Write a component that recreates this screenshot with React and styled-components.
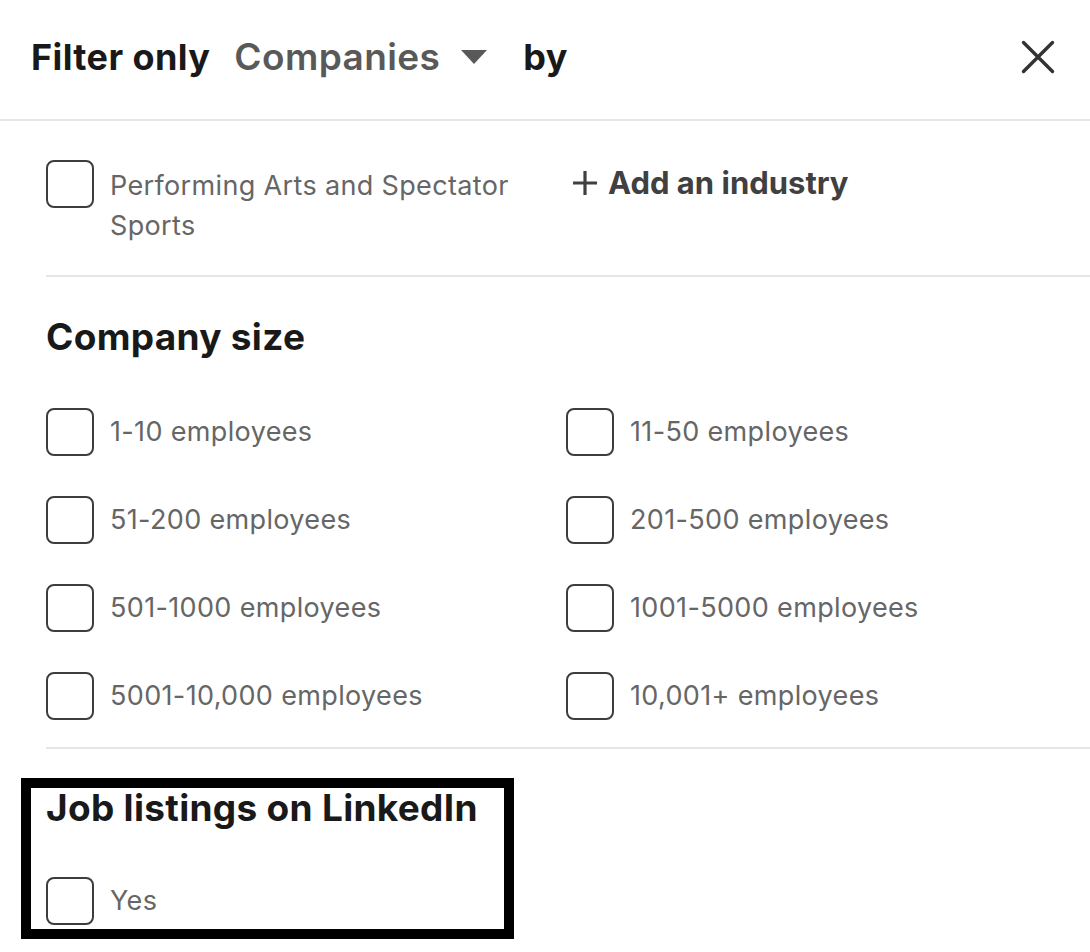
import React from 'react';
import styled, { createGlobalStyle } from 'styled-components';

const GlobalStyle = createGlobalStyle`
  html, body {
    margin: 0;
    padding: 0;
    background: #ffffff;
  }
  body {
    font-family: Inter, "Noto Sans", "Liberation Sans", sans-serif;
    -webkit-font-smoothing: antialiased;
  }
`;

const Panel = styled.div`
  width: 1090px;
  height: 952px;
  overflow: hidden;
  background: #ffffff;
`;

const Header = styled.header`
  display: flex;
  align-items: center;
  height: 121px;
  padding: 0 35px 6px 31px;
  border-bottom: 2px solid #e6e6e6;
  box-sizing: border-box;
`;

const Title = styled.span`
  font-size: 36px;
  font-weight: 700;
  color: #191919;
  letter-spacing: 0.4px;
`;

const TypeSelect = styled.button`
  display: flex;
  align-items: center;
  gap: 21px;
  margin: 0 36px 0 24px;
  padding: 0;
  border: 0;
  background: none;
  font-family: inherit;
  font-size: 37px;
  font-weight: 600;
  color: #595959;
  letter-spacing: 0.4px;
  cursor: pointer;
`;

const CloseButton = styled.button`
  margin-left: auto;
  display: flex;
  padding: 0;
  border: 0;
  background: none;
  cursor: pointer;
`;

const Body = styled.div`
  padding-left: 46px;
`;

const Section = styled.section`
  border-bottom: 2px solid #e6e6e6;
  padding: ${p => p.$pad};
`;

const Highlight = styled.section`
  margin: 29px 0 0 -25px;
  width: 493px;
  height: 161px;
  box-sizing: border-box;
  border: 10px solid #000;
  padding: 0 15px;
  overflow: hidden;
`;

const Heading = styled.h2`
  margin: 0;
  font-size: 37px;
  font-weight: 700;
  color: #191919;
  letter-spacing: 0.3px;
  line-height: 40px;
`;

const Grid = styled.div`
  display: grid;
  grid-template-columns: 520px 1fr;
  row-gap: 40px;
  margin-top: ${p => p.$mt || '0'};
`;

const Option = styled.label`
  display: flex;
  align-items: ${p => (p.$top ? 'flex-start' : 'center')};
  gap: 16px;
  margin-top: ${p => p.$mt || '0'};
  cursor: pointer;
`;

const Box = styled.span`
  flex: none;
  width: 48px;
  height: 48px;
  box-sizing: border-box;
  border: 2px solid #3d3d3d;
  border-radius: 8px;
`;

const Label = styled.span`
  font-size: 27px;
  line-height: 40px;
  letter-spacing: 0.35px;
  color: #666666;
  max-width: ${p => p.$max || 'none'};
  padding-top: ${p => (p.$top ? '6px' : '0')};
`;

const AddButton = styled.button`
  display: flex;
  align-items: center;
  gap: 10px;
  align-self: flex-start;
  margin: 4px 0 0 6px;
  padding: 0;
  border: 0;
  background: none;
  font-family: inherit;
  font-size: 31px;
  font-weight: 700;
  color: #404040;
  letter-spacing: 0;
  cursor: pointer;
`;

const Caret = () => (
  <svg width="26" height="14" viewBox="0 0 26 14">
    <path d="M0 0h26L13 14z" fill="#595959" />
  </svg>
);

const CloseIcon = () => (
  <svg width="34" height="34" viewBox="0 0 34 34">
    <path d="M2.5 2.5L31.5 31.5M31.5 2.5L2.5 31.5" stroke="#333" strokeWidth="3.4" strokeLinecap="round" />
  </svg>
);

const PlusIcon = () => (
  <svg width="26" height="26" viewBox="0 0 26 26">
    <path d="M13 1v24M1 13h24" stroke="#404040" strokeWidth="3.2" />
  </svg>
);

const sizes = [
  '1-10 employees',
  '11-50 employees',
  '51-200 employees',
  '201-500 employees',
  '501-1000 employees',
  '1001-5000 employees',
  '5001-10,000 employees',
  '10,001+ employees',
];

export default function App() {
  return (
    <Panel>
      <GlobalStyle />
      <Header>
        <Title>Filter only</Title>
        <TypeSelect>
          Companies
          <Caret />
        </TypeSelect>
        <Title>by</Title>
        <CloseButton aria-label="Close">
          <CloseIcon />
        </CloseButton>
      </Header>
      <Body>
        <Section $pad="39px 0 29px">
          <Grid>
            <Option $top>
              <Box />
              <Label $top $max="410px">Performing Arts and Spectator Sports</Label>
            </Option>
            <AddButton>
              <PlusIcon />
              Add an industry
            </AddButton>
          </Grid>
        </Section>
        <Section $pad="40px 0 27px">
          <Heading>Company size</Heading>
          <Grid $mt="51px">
            {sizes.map(s => (
              <Option key={s}>
                <Box />
                <Label>{s}</Label>
              </Option>
            ))}
          </Grid>
        </Section>
        <Highlight>
          <Heading>Job listings on LinkedIn</Heading>
          <Option $mt="49px">
            <Box />
            <Label>Yes</Label>
          </Option>
        </Highlight>
      </Body>
    </Panel>
  );
}
